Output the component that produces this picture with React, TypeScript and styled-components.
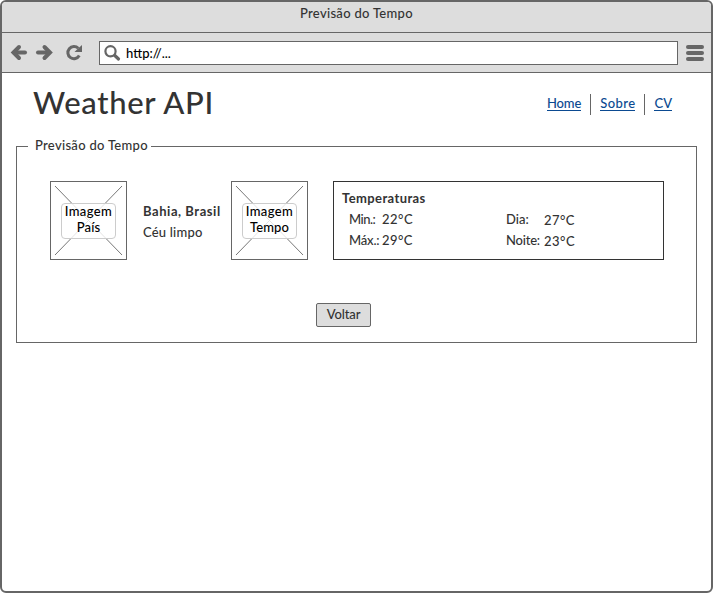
import React from "react";
import styled, { createGlobalStyle } from "styled-components";

const GlobalStyle = createGlobalStyle`
  * { box-sizing: border-box; }
  body {
    margin: 0;
    background: #fff;
    color: #333;
    font: 500 13px/16px Lato, "Open Sans", sans-serif;
    white-space: nowrap;
  }
`;

const Window = styled.div`
  width: 713px;
  height: 593px;
  border: 2px solid #666;
  border-radius: 6px;
  background: #fff;
  overflow: hidden;
`;

const TitleBar = styled.header`
  height: 31px;
  padding: 3px 0 0 298px;
  background: #ddd;
  border-bottom: 1px solid #666;
`;

const Toolbar = styled.div`
  height: 40px;
  display: flex;
  padding: 8px 0 0 8px;
  background: #ddd;
  border-bottom: 1px solid #666;
`;

const NavIcons = styled.svg`
  width: 89px;
  height: 24px;
  flex: none;
`;

const AddressBar = styled.div`
  width: 579px;
  height: 24px;
  display: flex;
  align-items: center;
  padding-left: 4px;
  gap: 5px;
  border: 1px solid #666;
  background: #fff;
  color: #000;
`;

const MenuBars = styled.div`
  display: flex;
  flex-direction: column;
  gap: 2px;
  margin: 4px 0 0 8px;
`;

const Bar = styled.span`
  width: 18px;
  height: 4px;
  border-radius: 2px;
  background: #666;
`;

const Header = styled.div`
  height: 73px;
  display: flex;
  justify-content: space-between;
  padding: 9px 39px 0 31px;
`;

const Heading = styled.h1`
  margin: 0;
  font-size: 31px;
  line-height: 40px;
  font-weight: 500;
`;

const Nav = styled.nav`
  display: flex;
  height: 21px;
  margin-top: 12px;
`;

const NavItem = styled.div`
  padding: 0 9px;
  & + & { border-left: 1px solid #666; }
  &:first-child { padding-left: 0; }
  &:last-child { padding-right: 0; }
`;

const NavLink = styled.a<{ $spacing?: number }>`
  display: block;
  height: 17px;
  line-height: 19px;
  letter-spacing: ${(p) => p.$spacing ?? 0}px;
  color: #0b4a91;
  border-bottom: 1px solid #0b4a91;
`;

const Group = styled.section`
  width: 681px;
  height: 197px;
  margin-left: 14px;
  border: 1px solid #666;
`;

const Legend = styled.div`
  width: 123px;
  height: 16px;
  margin: -10px 0 0 11px;
  padding-left: 7px;
  background: #fff;
`;

const Content = styled.div`
  display: flex;
  margin: 28px 0 0 33px;
`;

const ImageBox = styled.div`
  width: 77px;
  height: 79px;
  display: grid;
  place-items: center;
  flex: none;
  border: 1px solid #666;
  > * { grid-area: 1 / 1; }
`;

const Cross = styled.svg`
  width: 75px;
  height: 77px;
`;

const ImageLabel = styled.div`
  width: 55px;
  height: 36px;
  display: flex;
  flex-direction: column;
  align-items: center;
  border: 1px solid #ccc;
  border-radius: 4px;
  background: rgba(255, 255, 255, 0.8);
  color: #000;
  z-index: 1;
  > :first-child { margin-top: -1px; }
`;

const Place = styled.div`
  width: 104px;
  padding: 20px 0 0 16px;
  line-height: 21px;
`;

const Text = styled.span<{ $spacing?: number; $bold?: boolean }>`
  display: block;
  letter-spacing: ${(p) => p.$spacing ?? 0}px;
  font-weight: ${(p) => (p.$bold ? 700 : "inherit")};
`;

const Temperatures = styled.div`
  width: 331px;
  height: 79px;
  margin-left: 25px;
  padding: 8px 0 0 8px;
  border: 1px solid #333;
`;

const Readings = styled.div`
  display: grid;
  grid-template-columns: 33px 124px 38px 1fr;
  grid-auto-rows: 21px;
  line-height: 21px;
  margin: 3px 0 0 7px;
`;

const Reading = styled(Text)<{ $drop?: boolean }>`
  padding-top: ${(p) => (p.$drop ? 1 : 0)}px;
`;

const BackButton = styled.button`
  display: block;
  width: 55px;
  height: 24px;
  margin: 43px 0 0 299px;
  padding: 0 0 2px;
  border: 1px solid #666;
  border-radius: 2px;
  background: #ddd;
  color: #333;
  font: inherit;
`;

function Placeholder({ label, spacing }: { label: string; spacing: number }) {
  return (
    <ImageBox>
      <Cross viewBox="0 0 75 77" stroke="#777" strokeWidth="1">
        <path d="M4 4 71 73M71 4 4 73" />
      </Cross>
      <ImageLabel>
        <Text $spacing={0.4}>Imagem</Text>
        <Text $spacing={spacing}>{label}</Text>
      </ImageLabel>
    </ImageBox>
  );
}

export default function App() {
  return (
    <>
      <GlobalStyle />
      <Window>
        <TitleBar><Text $spacing={0.3}>Previsão do Tempo</Text></TitleBar>
        <Toolbar>
          <NavIcons viewBox="0 0 89 24" fill="none" stroke="#666">
            <path d="M15 11.500H4" strokeWidth="4" strokeLinecap="round" />
            <path d="M9 6 3.500 11.500 9 17" strokeWidth="4" strokeLinecap="round" />
            <path d="M28 11.500H39" strokeWidth="4" strokeLinecap="round" />
            <path d="M34.500 6 40 11.500 34.500 17" strokeWidth="4" strokeLinecap="round" />
            <path d="M68.300 7.300A6.100 6.100 0 1 0 69.300 14.600" strokeWidth="3" />
            <path d="M72 4V11H64.500L67 8.500Z" fill="#666" stroke="none" />
          </NavIcons>
          <AddressBar>
            <svg width="17" height="17" viewBox="0 0 17 17" fill="none" stroke="#666">
              <circle cx="6.500" cy="6.300" r="5.100" strokeWidth="2.200" />
              <path d="M10.800 10.500 14.500 14" strokeWidth="3.200" strokeLinecap="round" />
            </svg>
            <Text>http://...</Text>
          </AddressBar>
          <MenuBars><Bar /><Bar /><Bar /></MenuBars>
        </Toolbar>
        <Header>
          <Heading><Text $spacing={0.7}>Weather API</Text></Heading>
          <Nav>
            <NavItem><NavLink $spacing={-0.1}>Home</NavLink></NavItem>
            <NavItem><NavLink $spacing={0.4}>Sobre</NavLink></NavItem>
            <NavItem><NavLink>CV</NavLink></NavItem>
          </Nav>
        </Header>
        <Group>
          <Legend><Text $spacing={0.3}>Previsão do Tempo</Text></Legend>
          <Content>
            <Placeholder label="País" spacing={0.1} />
            <Place>
              <Text $bold $spacing={0.55}>Bahia, Brasil</Text>
              <Text $spacing={0.2}>Céu limpo</Text>
            </Place>
            <Placeholder label="Tempo" spacing={0.1} />
            <Temperatures>
              <Text $bold $spacing={0.4}>Temperaturas</Text>
              <Readings>
                <Reading $spacing={-0.5}>Min.:</Reading>
                <Reading $spacing={0.5}>22°C</Reading>
                <Reading>Dia:</Reading>
                <Reading $drop $spacing={0.4}>27°C</Reading>
                <Reading $spacing={-0.2}>Máx.:</Reading>
                <Reading $spacing={0.4}>29°C</Reading>
                <Reading $spacing={-0.2}>Noite:</Reading>
                <Reading $drop $spacing={0.5}>23°C</Reading>
              </Readings>
            </Temperatures>
          </Content>
          <BackButton><Text $spacing={-0.1}>Voltar</Text></BackButton>
        </Group>
      </Window>
    </>
  );
}
